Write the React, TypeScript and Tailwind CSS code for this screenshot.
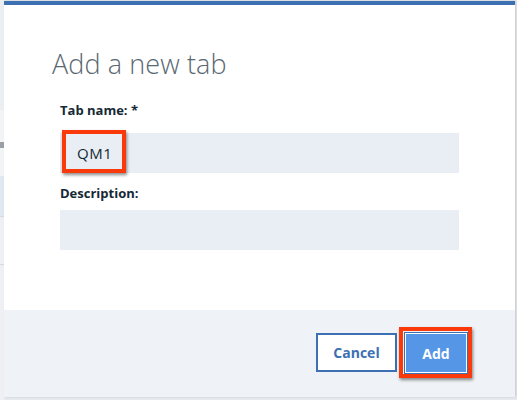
import React from "react";

export default function App() {
  return (
    <div className="w-[517px] h-[400px] bg-[#e6e9ed] flex overflow-hidden" style={{ fontFamily: '"Open Sans", "Liberation Sans", sans-serif' }}>
      <div className="w-[4px] flex flex-col shrink-0">
        <div className="h-[110px] bg-[#eceff2]" />
        <div className="h-[32px] bg-[#f2f4f6]" />
        <div className="h-[6px] bg-[#9aa0a6]" />
        <div className="h-[28px] bg-[#f2f4f6]" />
        <div className="h-[40px] bg-[#dfe7f0]" />
        <div className="h-[48px] bg-[#eef0f3] border-t border-[#d6dade]" />
        <div className="flex-1 bg-[#eef0f3] border-t border-[#d6dade]" />
      </div>
      <div className="w-[511px] mt-[1px] h-[396px] flex flex-col bg-white border-t-4 border-[#3d70b2] shadow-[1px_0_2px_rgba(0,0,0,0.15)]">
        <div className="flex-1 flex flex-col pl-[48px] pr-[56px]">
          <h1 className="mt-[42px] text-[27px] leading-[34px] font-light text-[#5a6872] tracking-[0.1px]">Add a new tab</h1>
          <label className="mt-[20px] ml-[8px] text-[13px] leading-[18px] font-bold text-[#152935]">Tab name: *</label>
          <div className="mt-[14px] ml-[8px] h-[40px] bg-[#e9eef5] relative flex items-center">
            <span className="ml-[17px] text-[15px] tracking-[0.5px] text-[#152935]">QM1</span>
            <div className="absolute left-[2px] top-[-3px] w-[64px] h-[43px] border-[4px] border-[#fa3a0a] shadow-[1px_2px_3px_rgba(0,0,0,0.45)]" />
          </div>
          <label className="mt-[11px] ml-[8px] text-[13px] leading-[18px] font-bold text-[#152935]">Description:</label>
          <div className="mt-[8px] ml-[8px] h-[40px] bg-[#e9eef5]" />
        </div>
        <div className="h-[87px] bg-[#eff2f6] flex justify-end items-start pr-[48px] pt-[23px] gap-[8px]">
          <button className="w-[81px] h-[39px] border-2 border-[#3d70b2] bg-white text-[#3d70b2] text-[14px] font-bold">Cancel</button>
          <div className="relative">
            <button className="w-[62px] h-[40px] bg-[#5596e6] border border-white outline outline-1 outline-[#3d70b2] text-white text-[14px] font-bold">Add</button>
            <div className="absolute left-[-6px] top-[-6px] w-[73px] h-[51px] border-[4px] border-[#fa3a0a] shadow-[1px_2px_3px_rgba(0,0,0,0.45)]" />
          </div>
        </div>
      </div>
    </div>
  );
}
